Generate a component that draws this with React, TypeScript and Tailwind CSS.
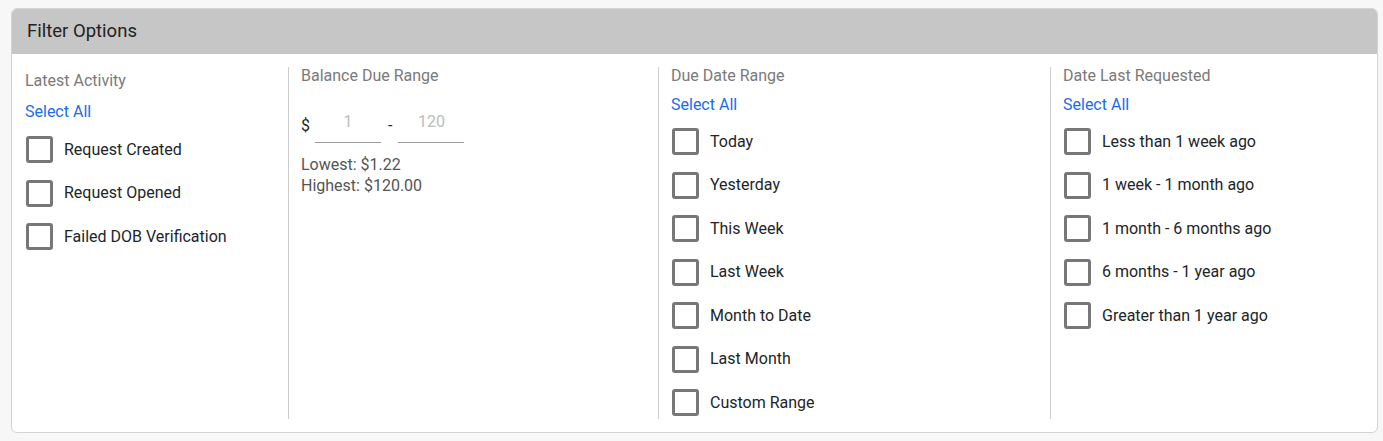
import React from "react";

const Box = ({ label }: { label: string }) => (
  <div className="flex h-[43.5px] items-center pl-[1px]">
    <div className="box-border size-[27px] shrink-0 rounded-[3px] border-[3px] border-[#777777] bg-white" />
    <span className="ml-[11px] text-[16px] leading-[20px] text-[#212529]">{label}</span>
  </div>
);

export default function App() {
  return (
    <div
      className="min-h-[441px] w-[1383px] bg-[#f7f7f7] pl-[11px] pt-[8px]"
      style={{ fontFamily: "Roboto, 'Liberation Sans', sans-serif" }}
    >
      <div className="box-border w-[1367px] overflow-hidden rounded-[6px] border border-[#d3d3d3] bg-white">
        <div className="flex h-[45px] items-center bg-[#c6c6c6] px-[15px] text-[18.5px] text-[#222222]">
          Filter Options
        </div>
        <div className="flex h-[378px]">
          {/* Column 1 */}
          <div className="mt-[13px] h-[352px] w-[276px] shrink-0 pl-[13px] pt-[6px]">
            <div className="text-[16px] leading-[16px] text-[#7a7a7a]">Latest Activity</div>
            <div className="mt-[13px] text-[16px] leading-[20px] text-[#1a6cf0]">Select All</div>
            <div className="mt-[6px]">
              <Box label="Request Created" />
              <Box label="Request Opened" />
              <Box label="Failed DOB Verification" />
            </div>
          </div>
          {/* Column 2 */}
          <div className="mt-[13px] h-[352px] w-[370px] shrink-0 border-l border-[#cccccc] pl-[12px] pt-[1px]">
            <div className="text-[16px] leading-[16px] text-[#7a7a7a]">Balance Due Range</div>
            <div className="mt-[27px] flex h-[32px] items-center text-[16px] text-[#212529]">
              <span className="mb-[2px]">$</span>
              <div className="ml-[5px] box-border h-[32px] w-[66px] border-b border-[#9a9a9a] pt-[1px] text-center leading-[20px] text-[#bdbdbd]">
                1
              </div>
              <span className="ml-[7px] mb-[2px]">-</span>
              <div className="ml-[6px] box-border h-[32px] w-[66px] border-b border-[#9a9a9a] pt-[1px] text-center leading-[20px] text-[#bdbdbd]">
                120
              </div>
            </div>
            <div className="mt-[11px] text-[16px] leading-[21px] text-[#555555]">
              <div>Lowest: $1.22</div>
              <div>Highest: $120.00</div>
            </div>
          </div>
          {/* Column 3 */}
          <div className="mt-[13px] h-[352px] w-[392px] shrink-0 border-l border-[#cccccc] pl-[12px] pt-[1px]">
            <div className="text-[16px] leading-[16px] text-[#7a7a7a]">Due Date Range</div>
            <div className="mt-[11px] text-[16px] leading-[20px] text-[#1a6cf0]">Select All</div>
            <div className="mt-[5px]">
              <Box label="Today" />
              <Box label="Yesterday" />
              <Box label="This Week" />
              <Box label="Last Week" />
              <Box label="Month to Date" />
              <Box label="Last Month" />
              <Box label="Custom Range" />
            </div>
          </div>
          {/* Column 4 */}
          <div className="mt-[13px] h-[352px] flex-1 border-l border-[#cccccc] pl-[12px] pt-[1px]">
            <div className="text-[16px] leading-[16px] text-[#7a7a7a]">Date Last Requested</div>
            <div className="mt-[11px] text-[16px] leading-[20px] text-[#1a6cf0]">Select All</div>
            <div className="mt-[5px]">
              <Box label="Less than 1 week ago" />
              <Box label="1 week - 1 month ago" />
              <Box label="1 month - 6 months ago" />
              <Box label="6 months - 1 year ago" />
              <Box label="Greater than 1 year ago" />
            </div>
          </div>
        </div>
      </div>
    </div>
  );
}
